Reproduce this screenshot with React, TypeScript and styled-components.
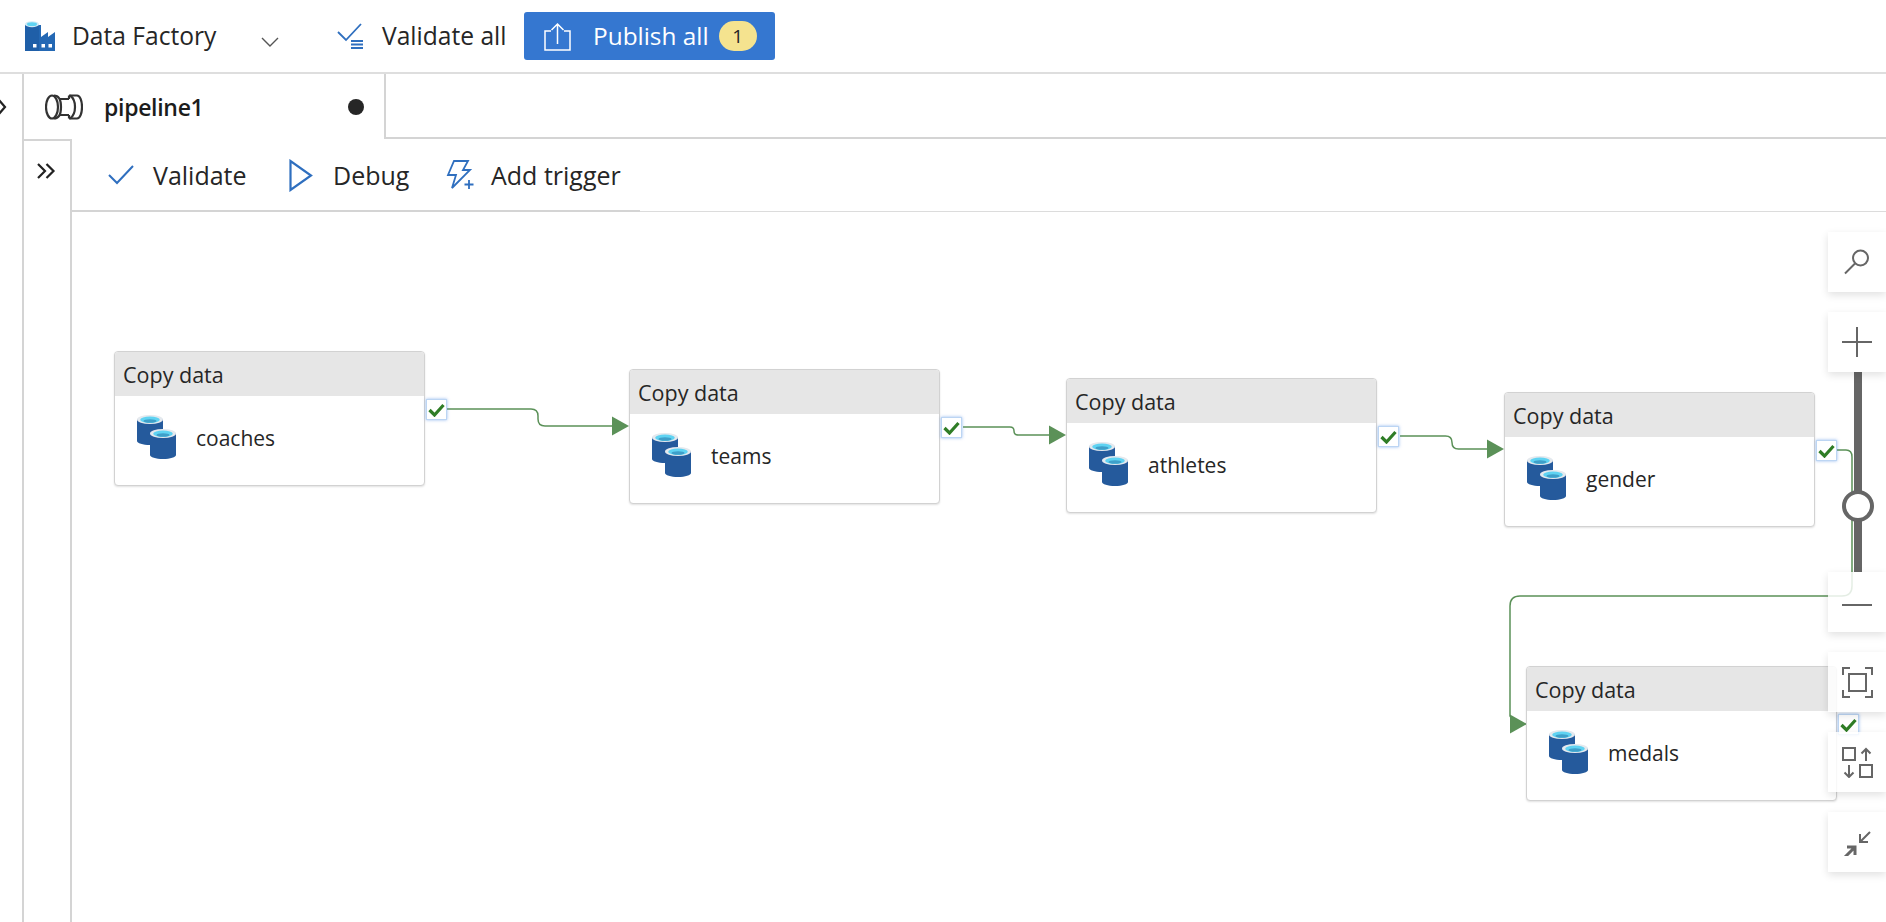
import React from "react";
import styled, { createGlobalStyle } from "styled-components";

const Global = createGlobalStyle`
  html, body { margin: 0; padding: 0; background: #fff; }
  #root { height: 922px; overflow: hidden; }
  * { box-sizing: border-box; }
`;

const FONT = `"Open Sans", "Noto Sans", "Liberation Sans", sans-serif`;
const LINE = "#d4d4d4";
const BLUE = "#2f6fbf";
const EDGE = "#5b9158";

const Page = styled.div`
  width: 1886px;
  height: 922px;
  display: flex;
  flex-direction: column;
  font-family: ${FONT};
  color: #262626;
  overflow: hidden;
`;

const TopBar = styled.header`
  height: 74px;
  flex: none;
  display: flex;
  align-items: center;
  padding: 0 0 0 25px;
  border-bottom: 2px solid #dedede;
`;

const BarLabel = styled.span`
  font-size: 24.600px;
  line-height: 34px;
  white-space: nowrap;
`;

const FactoryGroup = styled.div`
  display: flex;
  align-items: center;
  gap: 17px;
  width: 236px;
`;

const ChevronSlot = styled.div`
  width: 76px;
  display: flex;
  padding-top: 12px;
`;

const ValidateGroup = styled.div`
  display: flex;
  align-items: center;
  gap: 18px;
  width: 187px;
`;

const PublishButton = styled.button`
  width: 251px;
  height: 48px;
  padding: 0 0 0 20px;
  border: 0;
  border-radius: 3px;
  background: #3577d0;
  color: #fff;
  display: flex;
  align-items: center;
  font-family: ${FONT};
`;

const PublishLabel = styled(BarLabel)`
  margin-left: 22px;
  font-size: 24.400px;
`;

const Badge = styled.span`
  margin-left: 10px;
  width: 38px;
  height: 30px;
  border-radius: 15px;
  background: #f5e38f;
  color: #262626;
  font-size: 19px;
  display: flex;
  align-items: center;
  justify-content: center;
`;

const Main = styled.div`
  flex: 1;
  display: flex;
  min-height: 0;
`;

const OuterRail = styled.aside`
  width: 24px;
  flex: none;
  border-right: 2px solid ${LINE};
  padding-top: 24px;
  overflow: hidden;
`;

const RailGlyph = styled.div`
  margin-left: -3px;
  width: 10px;
`;

const Workspace = styled.div`
  flex: 1;
  min-width: 0;
  display: flex;
  flex-direction: column;
`;

const TabRow = styled.div`
  height: 65px;
  flex: none;
  display: flex;
`;

const Tab = styled.div`
  width: 362px;
  display: flex;
  align-items: center;
  padding: 0 20px 0 21px;
  border-right: 2px solid ${LINE};
`;

const TabTitle = styled.span`
  margin-left: 21px;
  font-size: 23px;
  font-weight: 600;
  letter-spacing: -0.3px;
  color: #1c1c1c;
  flex: 1;
`;

const Dot = styled.span`
  width: 16px;
  height: 16px;
  border-radius: 50%;
  background: #262626;
`;

const TabRest = styled.div`
  flex: 1;
  border-bottom: 2px solid ${LINE};
`;

const Body = styled.div`
  flex: 1;
  min-height: 0;
  display: flex;
`;

const InnerRail = styled.aside`
  width: 48px;
  flex: none;
  border-top: 2px solid ${LINE};
  border-right: 2px solid ${LINE};
  display: flex;
  justify-content: center;
  padding: 22px 2px 0 0;
`;

const Stage = styled.div`
  flex: 1;
  min-width: 0;
  display: flex;
  flex-direction: column;
`;

const Toolbar = styled.div`
  height: 73px;
  flex: none;
  display: flex;
  align-items: center;
  padding: 0 0 0 36px;
  border-bottom: 1px solid #dcdcdc;
  position: relative;
`;

const ToolbarEdge = styled.div`
  position: absolute;
  left: 0;
  bottom: -1px;
  width: 568px;
  height: 2px;
  background: ${LINE};
`;

const ToolButton = styled.div<{ $w: number; $gap: number }>`
  display: flex;
  align-items: center;
  width: ${(p) => p.$w}px;
  gap: ${(p) => p.$gap}px;
`;

const ToolLabel = styled.span`
  font-size: 25px;
  line-height: 32px;
  white-space: nowrap;
`;

const Canvas = styled.div`
  flex: 1;
  position: relative;
  overflow: hidden;
`;

const Edges = styled.svg`
  position: absolute;
  left: 0;
  top: 0;
`;

const Node = styled.div<{ $x: number; $y: number }>`
  position: absolute;
  left: ${(p) => p.$x}px;
  top: ${(p) => p.$y}px;
  width: 311px;
  height: 135px;
  background: #fff;
  border: 1px solid #d2d2d2;
  border-radius: 4px;
  box-shadow: 0 1px 2px rgba(0, 0, 0, 0.12);
`;

const NodeHeader = styled.div`
  height: 44px;
  background: #e6e6e6;
  border-radius: 3px 3px 0 0;
  padding-left: 8px;
  display: flex;
  align-items: center;
  font-size: 21.500px;
`;

const NodeBody = styled.div`
  display: flex;
  align-items: center;
  padding: 19px 0 0 22px;
  gap: 19px;
  font-size: 21px;
  line-height: 30px;
`;

const CheckPort = styled.div`
  position: absolute;
  left: 311px;
  top: 47px;
  width: 21px;
  height: 21px;
  background: #fff;
  border: 1px solid #bcd5f3;
  box-shadow: 0 0 3px rgba(80, 140, 230, 0.6);
  display: flex;
  align-items: center;
  justify-content: center;
`;

const Controls = styled.div`
  position: absolute;
  right: 0;
  top: 20px;
  width: 58px;
  display: flex;
  flex-direction: column;
`;

const ControlButton = styled.div<{ $gap?: number }>`
  width: 58px;
  height: 60px;
  margin-bottom: ${(p) => p.$gap ?? 20}px;
  background: rgba(255, 255, 255, 0.84);
  box-shadow: 0 3px 8px rgba(0, 0, 0, 0.12);
  display: flex;
  align-items: center;
  justify-content: center;
  position: relative;
  z-index: 1;
`;

const SliderTrack = styled.div`
  width: 58px;
  height: 200px;
  position: relative;
  display: flex;
  justify-content: center;
`;

const SliderBar = styled.div`
  width: 8px;
  height: 100%;
  margin-left: 2px;
  background: #666;
`;

const SliderKnob = styled.div`
  position: absolute;
  left: 14px;
  top: 118px;
  width: 32px;
  height: 32px;
  border-radius: 50%;
  border: 4px solid #666;
  background: #fff;
`;

const Cylinder = ({ x, y }: { x: number; y: number }) => (
  <g transform={`translate(${x} ${y})`}>
    <path d="M0 4v22c0 2.2 5.8 4 13 4s13-1.8 13-4V4z" fill="#255a9c" />
    <ellipse cx="13" cy="4.5" rx="13" ry="4.5" fill="#e4e9ee" />
    <ellipse cx="13" cy="4.7" rx="9.8" ry="3.2" fill="#5fd3f2" />
    <ellipse cx="13" cy="6" rx="6.5" ry="1.7" fill="#3f9fc9" />
  </g>
);

const DataIcon = () => (
  <svg width="40" height="45" viewBox="0 0 40 45">
    <Cylinder x={0} y={0} />
    <Cylinder x={13} y={14} />
  </svg>
);

const FactoryIcon = () => (
  <svg width="30" height="30" viewBox="0 0 30 30">
    <path d="M0 4v26h30V11l-7 5v-5l-7 5V4z" fill="#2468b4" />
    <path d="M0 4v26h14V4z" fill="#1f5fa8" />
    <ellipse cx="7" cy="3.2" rx="7" ry="3" fill="#cfe9f5" />
    <ellipse cx="7" cy="3.2" rx="5" ry="1.9" fill="#5fd3f2" />
    <path d="M8 23h3.500v3.500H8zM16.500 23H20v3.500h-3.500zM23.500 23H27v3.500h-3.500z" fill="#fff" />
  </svg>
);

const Chevron = () => (
  <svg width="18" height="10" viewBox="0 0 18 10" fill="none" stroke="#555" strokeWidth="1.400">
    <path d="M1 1l8 8 8-8" />
  </svg>
);

const ValidateAllIcon = () => (
  <svg width="27" height="26" viewBox="0 0 27 26" fill="none" stroke={BLUE}>
    <path d="M1 9l8 8L24 1" strokeWidth="1.800" />
    <path d="M14 18h12M14 21.500h12M14 25h12" strokeWidth="2.200" />
  </svg>
);

const UploadIcon = () => (
  <svg width="27" height="29" viewBox="0 0 27 29" fill="none" stroke="#fff" strokeWidth="1.500">
    <path d="M7 9H1v19h25V9h-6" />
    <path d="M13.500 22V2M7.500 8l6-6 6 6" />
  </svg>
);

const PipelineIcon = () => (
  <svg width="38" height="26" viewBox="0 0 38 26" fill="none" stroke="#333" strokeWidth="2.200">
    <ellipse cx="7" cy="13" rx="6" ry="11.500" />
    <path d="M9 1.500c5 0 7 5 7 11.500s-2 11.500-7 11.500" />
    <path d="M15 5h9M15 21h9M24 1.500v3.500M24 21v3.500" />
    <path d="M24 1.500h8c3 0 5 5 5 11.500s-2 11.500-5 11.500h-8" />
    <path d="M25 1.500c3 2 5 6 5 11.500s-2 9.500-5 11.500" />
  </svg>
);

const SmallChevron = () => (
  <svg width="10" height="18" viewBox="0 0 10 18" fill="none" stroke="#222" strokeWidth="2.200">
    <path d="M1 1l7 8-7 8" />
  </svg>
);

const DoubleChevron = () => (
  <svg width="19" height="16" viewBox="0 0 19 16" fill="none" stroke="#222" strokeWidth="2.200">
    <path d="M1 1l7 7-7 7M9.500 1l7 7-7 7" />
  </svg>
);

const CheckIcon = () => (
  <svg width="26" height="20" viewBox="0 0 26 20" fill="none" stroke={BLUE} strokeWidth="2">
    <path d="M1 10l8 8L25 1" />
  </svg>
);

const PlayIcon = () => (
  <svg width="24" height="33" viewBox="0 0 24 33" fill="none" stroke={BLUE} strokeWidth="2.200">
    <path d="M1.500 2v29L22 16.500z" />
  </svg>
);

const TriggerIcon = () => (
  <svg width="31" height="30" viewBox="0 0 31 30" fill="none" stroke={BLUE} strokeWidth="1.800">
    <path d="M9 1h14l-5 9h7L7 28l4-13H3z" />
    <path d="M24 20v9M19.500 24.500h9" />
  </svg>
);

const GreenCheck = () => (
  <svg width="17" height="14" viewBox="0 0 17 14" fill="none" stroke="#2f7d26" strokeWidth="3.200">
    <path d="M1.500 7l5 5 9-10" />
  </svg>
);

const SearchIcon = () => (
  <svg width="26" height="26" viewBox="0 0 26 26" fill="none" stroke="#666" strokeWidth="2">
    <circle cx="16.500" cy="9" r="7.500" />
    <path d="M11 14.500L1 24.500" />
  </svg>
);

const PlusIcon = () => (
  <svg width="30" height="30" viewBox="0 0 30 30" fill="none" stroke="#666" strokeWidth="2">
    <path d="M15 0v30M0 15h30" />
  </svg>
);

const MinusIcon = () => (
  <svg width="30" height="30" viewBox="0 0 30 30" fill="none" stroke="#666" strokeWidth="2">
    <path d="M0 18h30" />
  </svg>
);

const FitIcon = () => (
  <svg width="31" height="31" viewBox="0 0 31 31" fill="none" stroke="#666" strokeWidth="2">
    <path d="M1 8V1h7M23 1h7v7M30 23v7h-7M8 30H1v-7" />
    <rect x="7" y="7" width="17" height="17" strokeWidth="2" />
  </svg>
);

const AutoAlignIcon = () => (
  <svg width="31" height="31" viewBox="0 0 31 31" fill="none" stroke="#666" strokeWidth="2">
    <rect x="1" y="1" width="12" height="12" />
    <rect x="18" y="18" width="12" height="12" />
    <path d="M24 14V2M19.500 6.500L24 2l4.500 4.500M7 18v12M2.500 25.500L7 30l4.500-4.500" />
  </svg>
);

const CollapseIcon = () => (
  <svg width="28" height="28" viewBox="0 -3 28 28" fill="none" stroke="#666">
    <path d="M27 1L17 11M17 3v8h8" strokeWidth="2" />
    <path d="M12 16L2 26M4 16h8v8" strokeWidth="3" />
  </svg>
);

const ORIGIN = { x: 72, y: 212 };
const nodes = [
  { name: "coaches", x: 114, y: 351 },
  { name: "teams", x: 629, y: 369 },
  { name: "athletes", x: 1066, y: 378 },
  { name: "gender", x: 1504, y: 392 },
  { name: "medals", x: 1526, y: 666 },
];

const sCurve = (x1: number, y1: number, mid: number, x2: number, y2: number) => {
  const r = Math.min(7, (y2 - y1) / 2);
  return `M${x1} ${y1}H${mid - r}Q${mid} ${y1} ${mid} ${y1 + r}V${y2 - r}Q${mid} ${y2} ${mid + r} ${y2}H${x2}`;
};

const ox = ORIGIN.x;
const oy = ORIGIN.y;
const edgePaths = [
  sCurve(446 - ox, 409 - oy, 538 - ox, 615 - ox, 426 - oy),
  sCurve(963 - ox, 427 - oy, 1014 - ox, 1052 - ox, 435 - oy),
  sCurve(1400 - ox, 436 - oy, 1452 - ox, 1490 - ox, 449 - oy),
  `M${1837 - ox} ${450 - oy}H${1846 - ox}Q${1852 - ox} ${450 - oy} ${1852 - ox} ${457 - oy}V${586 - oy}Q${1852 - ox} ${596 - oy} ${1842 - ox} ${596 - oy}H${1520 - ox}Q${1510 - ox} ${596 - oy} ${1510 - ox} ${606 - oy}V${716 - oy}L${1514 - ox} ${722 - oy}`,
];
const arrows = [
  [629, 426],
  [1066, 435],
  [1504, 449],
  [1527, 724],
];

export default function App() {
  return (
    <Page>
      <Global />
      <TopBar>
        <FactoryGroup>
          <FactoryIcon />
          <BarLabel>Data Factory</BarLabel>
        </FactoryGroup>
        <ChevronSlot>
          <Chevron />
        </ChevronSlot>
        <ValidateGroup>
          <ValidateAllIcon />
          <BarLabel>Validate all</BarLabel>
        </ValidateGroup>
        <PublishButton>
          <UploadIcon />
          <PublishLabel>Publish all</PublishLabel>
          <Badge>1</Badge>
        </PublishButton>
      </TopBar>
      <Main>
        <OuterRail>
          <RailGlyph>
            <SmallChevron />
          </RailGlyph>
        </OuterRail>
        <Workspace>
          <TabRow>
            <Tab>
              <PipelineIcon />
              <TabTitle>pipeline1</TabTitle>
              <Dot />
            </Tab>
            <TabRest />
          </TabRow>
          <Body>
            <InnerRail>
              <DoubleChevron />
            </InnerRail>
            <Stage>
              <Toolbar>
                <ToolButton $w={181} $gap={19}>
                  <CheckIcon />
                  <ToolLabel>Validate</ToolLabel>
                </ToolButton>
                <ToolButton $w={156} $gap={20}>
                  <PlayIcon />
                  <ToolLabel>Debug</ToolLabel>
                </ToolButton>
                <ToolButton $w={200} $gap={15}>
                  <TriggerIcon />
                  <ToolLabel>Add trigger</ToolLabel>
                </ToolButton>
                <ToolbarEdge />
              </Toolbar>
              <Canvas>
                <Edges width="1814" height="710">
                  {edgePaths.map((d) => (
                    <path key={d} d={d} fill="none" stroke={EDGE} strokeWidth="1.500" />
                  ))}
                  {arrows.map(([x, y]) => (
                    <path key={x} d={`M${x - ox} ${y - oy}l-17 -9.500v19z`} fill={EDGE} />
                  ))}
                </Edges>
                {nodes.map((n) => (
                  <Node key={n.name} $x={n.x - ox} $y={n.y - oy}>
                    <NodeHeader>Copy data</NodeHeader>
                    <NodeBody>
                      <DataIcon />
                      <span>{n.name}</span>
                    </NodeBody>
                    <CheckPort>
                      <GreenCheck />
                    </CheckPort>
                  </Node>
                ))}
                <Controls>
                  <ControlButton>
                    <SearchIcon />
                  </ControlButton>
                  <ControlButton $gap={0}>
                    <PlusIcon />
                  </ControlButton>
                  <SliderTrack>
                    <SliderBar />
                    <SliderKnob />
                  </SliderTrack>
                  <ControlButton>
                    <MinusIcon />
                  </ControlButton>
                  <ControlButton>
                    <FitIcon />
                  </ControlButton>
                  <ControlButton>
                    <AutoAlignIcon />
                  </ControlButton>
                  <ControlButton>
                    <CollapseIcon />
                  </ControlButton>
                </Controls>
              </Canvas>
            </Stage>
          </Body>
        </Workspace>
      </Main>
    </Page>
  );
}
